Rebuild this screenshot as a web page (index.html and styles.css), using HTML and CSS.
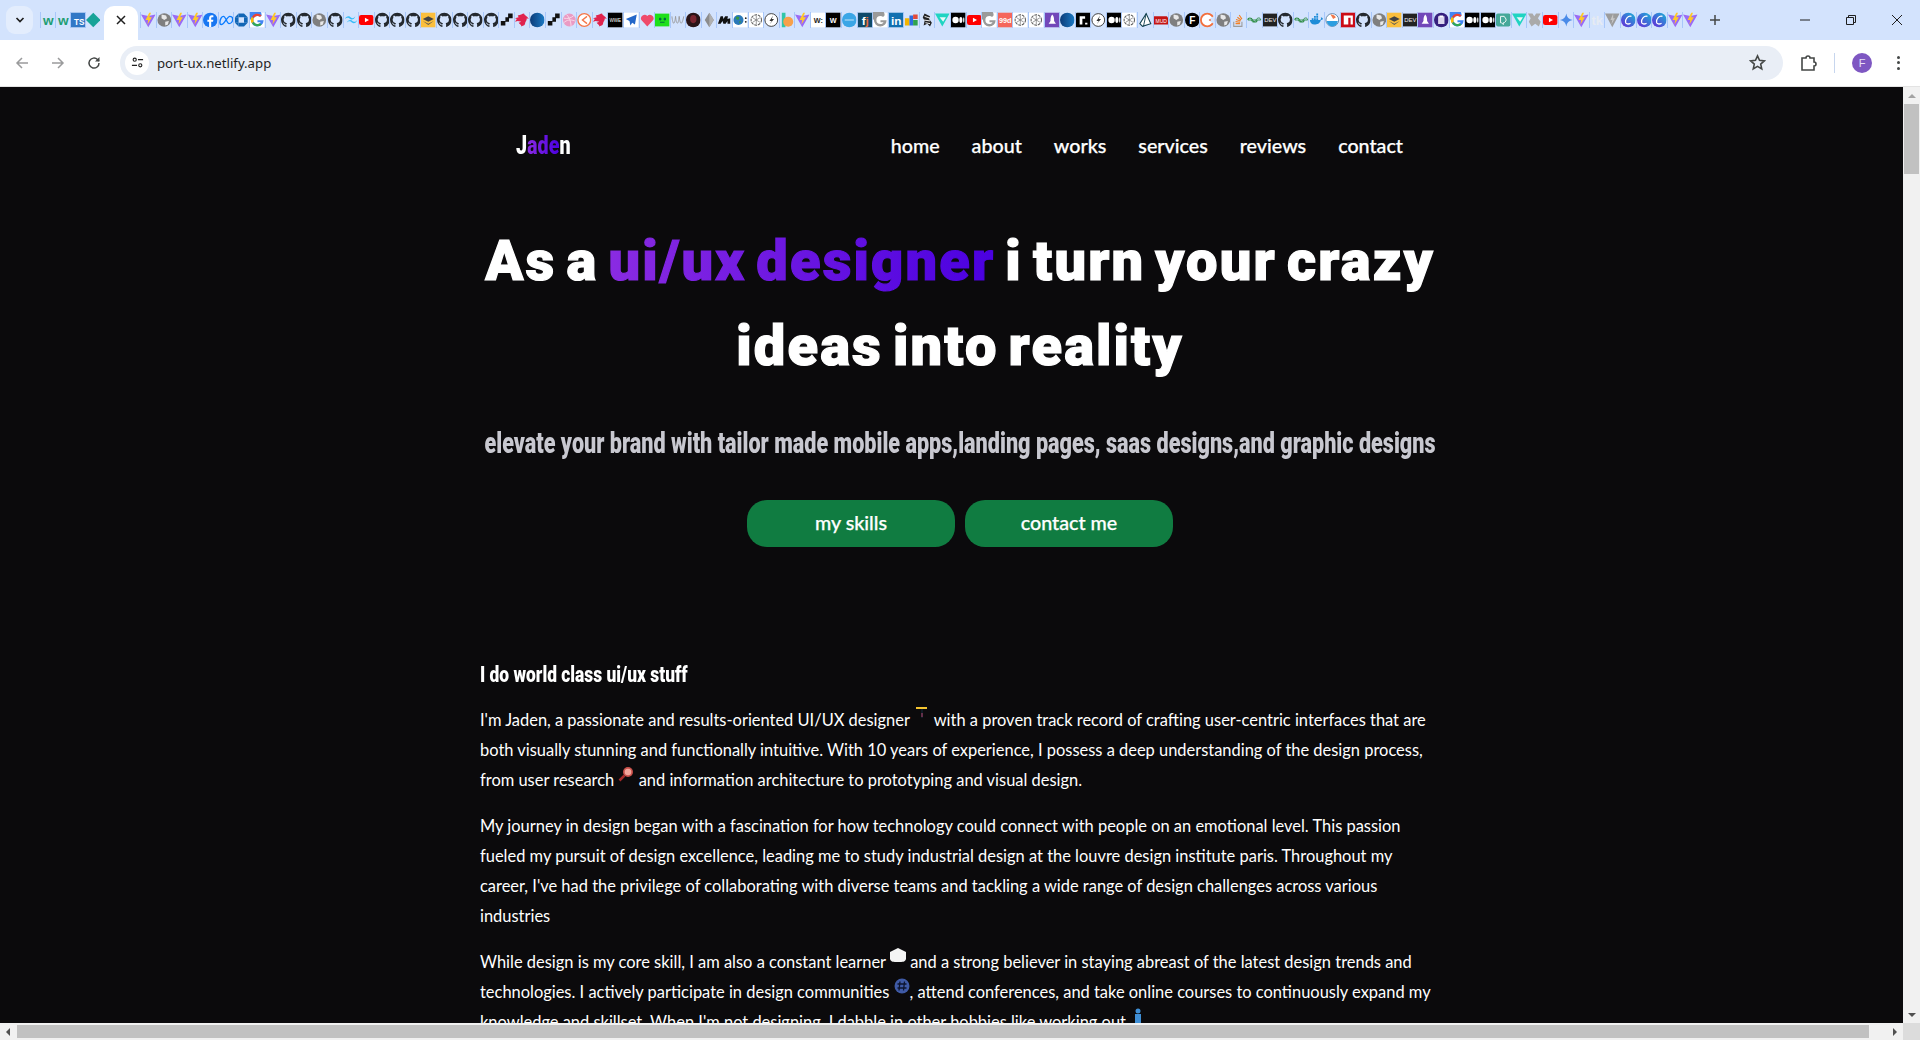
FILE: index.html
```html
<!DOCTYPE html>
<html lang="en">
<head>
<meta charset="utf-8">
<title>port-ux.netlify.app</title>
<link rel="stylesheet" href="styles.css">
</head>
<body>
<svg class="defs" width="0" height="0">
<defs>
<symbol id="vite" viewBox="0 0 16 16"><path d="M0 2 8 3.500 16 2 8 16z" fill="#9a6bf5"/><path d="M9 0 5 8h3L7 13l5-8H9l2-5z" fill="#ffc928"/></symbol>
<symbol id="globe" viewBox="0 0 16 16"><circle cx="8" cy="8" r="7.500" fill="#7f7f7f"/><path d="M5 2l5 1 1 3-3 2-3-2zM9 10l4-1-1 4-3 1z" fill="#e8e8e8"/></symbol>
<symbol id="gh" viewBox="0 0 16 16"><path d="M8 0C3.580 0 0 3.580 0 8c0 3.540 2.290 6.530 5.470 7.590.4.070.55-.17.55-.38 0-.19-.01-.82-.01-1.490-2.010.37-2.530-.49-2.690-.94-.09-.23-.48-.94-.82-1.130-.28-.15-.68-.52-.01-.53.63-.01 1.080.58 1.230.82.72 1.210 1.870.87 2.330.66.07-.52.28-.87.51-1.070-1.780-.2-3.640-.89-3.640-3.950 0-.87.31-1.590.82-2.150-.08-.2-.36-1.020.08-2.120 0 0 .67-.21 2.200.82.64-.18 1.320-.27 2-.27.68 0 1.360.09 2 .27 1.530-1.040 2.200-.82 2.200-.82.44 1.100.16 1.920.08 2.120.51.56.82 1.270.82 2.150 0 3.070-1.870 3.750-3.650 3.950.29.25.54.73.54 1.480 0 1.070-.01 1.930-.01 2.200 0 .21.15.46.55.38A8.013 8.013 0 0016 8c0-4.420-3.580-8-8-8z" fill="#24292f"/></symbol>
<symbol id="fb" viewBox="0 0 16 16"><circle cx="8" cy="8" r="8" fill="#1877f2"/><path d="M9 16v-6h2l.4-2.400H9V6.200c0-.8.3-1.200 1.200-1.200h1.200V3c-.6-.1-1.200-.2-1.800-.2C8 2.800 6.700 4 6.700 6v1.600H4.800V10h1.900v6z" fill="#fff"/></symbol>
<symbol id="meta" viewBox="0 0 16 16"><path d="M1 11c0-4 2-7 4-7s4 8 6 8 4-2 4-5-2-3-3-3-3 2-5 5-3 4-4.500 4S1 12 1 11z" fill="none" stroke="#0a7cff" stroke-width="1.500"/></symbol>
<symbol id="chase" viewBox="0 0 16 16"><path d="M5 1h6v4H5zM11 5h4v6h-4zM5 11h6v4H5zM1 5h4v6H1z" fill="#1266b5"/><path d="M5 1 1 5h4zM11 1l4 4h-4zM15 11l-4 4v-4zM1 11l4 4v-4z" fill="#1266b5"/></symbol>
<symbol id="g" viewBox="0 0 16 16"><rect width="16" height="16" fill="#fff"/><path d="M14 8.200H8.200v2.300h3.300c-.4 1.300-1.600 2-3.300 2a4.500 4.500 0 010-9c1.100 0 2.100.4 2.900 1.100l1.700-1.700A7 7 0 101 8a7 7 0 0014 .2z" fill="#4285f4"/><path d="M2.200 4.500l2.100 1.600a4.500 4.500 0 016.800-1.700l1.700-1.700a7 7 0 00-10.600 1.800z" fill="#ea4335"/><path d="M2.200 11.500l2.100-1.600a4.500 4.500 0 006.700 1.700l1.800 1.500a7 7 0 01-10.600-1.600z" fill="#34a853"/><path d="M1.700 4.700 4.200 6.200a4.500 4.500 0 000 3.500l-2.300 1.800a7 7 0 01-.2-6.800z" fill="#fbbc05"/></symbol>
<symbol id="gg" viewBox="0 0 16 16"><rect width="16" height="16" fill="#fff"/><path d="M14 8.200H8.200v2.300h3.300c-.4 1.300-1.600 2-3.300 2a4.500 4.500 0 010-9c1.100 0 2.100.4 2.900 1.100l1.700-1.700A7 7 0 101 8a7 7 0 0014 .2z" fill="#9a9a9a"/></symbol>
<symbol id="tw" viewBox="0 0 16 16"><path d="M1 7c1-2 2-3 4-3s2.500 2 4 2 2.500-.5 3.500-2c-1 2.500-2 3.500-4 3.500S6 5.500 4.500 5.500 2 6 1 7zM3 11c1-2 2-3 4-3s2.500 2 4 2 2.500-.5 3.500-2c-1 2.500-2 3.500-4 3.500S8 9.500 6.500 9.500 4 10 3 11z" fill="#38bdf8"/></symbol>
<symbol id="yt" viewBox="0 0 16 16"><rect y="2.500" width="16" height="11" rx="2.500" fill="#f00"/><path d="M6.500 5.500 11 8l-4.500 2.500z" fill="#fff"/></symbol>
<symbol id="stack" viewBox="0 0 16 16"><rect width="16" height="16" fill="#fbbf3d"/><path d="M8 4l6 3-6 3-6-3z" fill="#444"/><path d="M2 9l6 3 6-3-6 4.500z" fill="#555"/></symbol>
<symbol id="blk" viewBox="0 0 16 16"><path d="M2 9h5V5h3V1h5v5h-4v4H7v4H2z" fill="#111"/></symbol>
<symbol id="nest" viewBox="0 0 16 16"><path d="M3 3c3 0 5-2 7-2 0 2 4 3 5 6l-2-1c0 3-2 4-2 6s-3 2-4 3c0-2-2-2-3-4l3-1-4-1-3 1 2-3-2-1 4-1z" fill="#e0234e"/></symbol>
<symbol id="bluec" viewBox="0 0 16 16"><defs><linearGradient id="bc" x1="0" x2="1" y1="0" y2="0"><stop offset="0" stop-color="#0c3c78"/><stop offset="1" stop-color="#1b7ac4"/></linearGradient></defs><circle cx="8" cy="8" r="8" fill="url(#bc)"/></symbol>
<symbol id="drib" viewBox="0 0 16 16"><circle cx="8" cy="8" r="7" fill="#ea9bc4"/><path d="M2 6c4 1 8 0 11-3M5 2c3 3 5 8 5 13M2 11c3-3 7-4 12-2" stroke="#f9dbe9" fill="none"/></symbol>
<symbol id="oc" viewBox="0 0 16 16"><circle cx="8" cy="8" r="7" fill="#fff" stroke="#f4774a" stroke-width="1.500"/><path d="M11 4 6 8l5 4" fill="none" stroke="#f4774a" stroke-width="1.500"/></symbol>
<symbol id="blacksq" viewBox="0 0 16 16"><rect width="16" height="16" fill="#000"/><text x="8" y="10" class="svgt" font-size="5" fill="#fff" text-anchor="middle">WWE</text></symbol>
<symbol id="plane" viewBox="0 0 16 16"><rect width="16" height="16" fill="#fff"/><path d="M14 2 2 7l4 2 1 5 2-3 3 2z" fill="#2467c9"/></symbol>
<symbol id="heart" viewBox="0 0 16 16"><path d="M8 15 1.500 8A4 4 0 018 3.500 4 4 0 0114.500 8z" fill="#ef4a6a"/></symbol>
<symbol id="green" viewBox="0 0 16 16"><rect y="1" width="16" height="14" fill="#1ee01a"/><path d="M5 6h1.500v2H5zM10 6h1.500v2H10zM5.500 10.500h5" stroke="#064" fill="#064"/></symbol>
<symbol id="wave" viewBox="0 0 16 16"><path d="M1 4c1 10 3 10 4 0 1 10 3 10 4 0 1 10 3 10 5 0" fill="none" stroke="#9a9a9a"/></symbol>
<symbol id="dark" viewBox="0 0 16 16"><circle cx="8" cy="8" r="8" fill="#2a1517"/><ellipse cx="8" cy="7" rx="3.500" ry="4.500" fill="#7a2630"/></symbol>
<symbol id="eth" viewBox="0 0 16 16"><path d="M8 0l5 8-5 8-5-8z" fill="#8c8c8c"/><path d="M8 0v16l5-8z" fill="#b0b0b0"/></symbol>
<symbol id="mm" viewBox="0 0 16 16"><path d="M1 12 4 4h2.500l.5 3 2-3h3l-.5 3 3-1v6h-3V9l-2 3H7L6 9l-2 3z" fill="#111"/></symbol>
<symbol id="earth" viewBox="0 0 16 16"><rect width="16" height="16" fill="#fff"/><circle cx="6" cy="8" r="5.500" fill="#2a79b9"/><path d="M4 4l3 1-1 3-3-1zM7 9l2 1-2 2z" fill="#3a9a3d"/><circle cx="14" cy="6" r="1" fill="#222"/><circle cx="14" cy="10" r="1" fill="#222"/></symbol>
<symbol id="ai" viewBox="0 0 16 16"><rect width="16" height="16" fill="#fff"/><circle cx="8" cy="8" r="5.700" fill="none" stroke="#555" stroke-width="1.100" stroke-dasharray="3 1"/><path d="M8 3v10M4 5.500l8 5M12 5.500l-8 5" stroke="#777" stroke-width=".8"/></symbol>
<symbol id="bolt" viewBox="0 0 16 16"><circle cx="8" cy="8" r="7" fill="#fff" stroke="#333"/><path d="M10 3 6 9h2.500L6 13l5-6H8.500z" fill="#333"/></symbol>
<symbol id="orange" viewBox="0 0 16 16"><path d="M2 0h4v16H2z" fill="#31c6a8"/><circle cx="9" cy="10" r="5.500" fill="#f7a14a"/></symbol>
<symbol id="wc" viewBox="0 0 16 16"><rect width="16" height="16" fill="#fff"/><text x="8" y="11" class="svgt" font-size="8" font-weight="700" fill="#222" text-anchor="middle">W:</text></symbol>
<symbol id="ww" viewBox="0 0 16 16"><rect width="16" height="16" fill="#000"/><text x="8" y="11" class="svgt" font-size="8" font-weight="700" fill="#fff" text-anchor="middle">W</text></symbol>
<symbol id="bluejob" viewBox="0 0 16 16"><circle cx="8" cy="8" r="8" fill="#3ba6e6"/><path d="M3 8h10" stroke="#cfe9fa"/></symbol>
<symbol id="fj" viewBox="0 0 16 16"><rect width="16" height="16" fill="#0f4a6a"/><text x="8" y="13" class="svgt" font-size="13" font-weight="700" fill="#fff" text-anchor="middle">f<tspan fill="#ea6a3a">j</tspan></text></symbol>
<symbol id="in" viewBox="0 0 16 16"><rect width="16" height="16" fill="#1170b0"/><text x="8" y="13" class="svgt" font-size="13" font-weight="700" fill="#fff" text-anchor="middle">in</text></symbol>
<symbol id="colors" viewBox="0 0 16 16"><path d="M1 6h5v8H1z" fill="#f4b400"/><path d="M6 3h4v11H6z" fill="#2d6cdf"/><path d="M10 2h5v5h-5z" fill="#e24a3a"/><path d="M10 8h5v6h-5z" fill="#2fa24d"/></symbol>
<symbol id="zebra" viewBox="0 0 16 16"><path d="M5 1l6 3-1 3 3 4-2 4-3-3-4 2 1-5-2-4z" fill="#222"/><path d="M5 4l6 2M4 8l7 1M6 11l5 1" stroke="#fff"/></symbol>
<symbol id="tv" viewBox="0 0 16 16"><path d="M0 1h16L8 15z" fill="#20d4c2"/><path d="M5 5h7l-3 5z" fill="#eafaf8"/></symbol>
<symbol id="med" viewBox="0 0 16 16"><rect width="16" height="16" fill="#000"/><circle cx="5" cy="8" r="3.500" fill="#fff"/><ellipse cx="10.800" cy="8" rx="1.700" ry="3.300" fill="#fff"/><ellipse cx="14" cy="8" rx=".7" ry="3" fill="#fff"/></symbol>
<symbol id="d99" viewBox="0 0 16 16"><rect width="16" height="16" fill="#f5665c"/><text x="8" y="11" class="svgt" font-size="8" font-weight="700" fill="#fff" text-anchor="middle">99d</text></symbol>
<symbol id="rock" viewBox="0 0 16 16"><rect width="16" height="16" fill="#7248b9"/><path d="M8 2c2 2 2 5 2 7l2 3H4l2-3c0-2 0-5 2-7z" fill="#fff"/></symbol>
<symbol id="rr" viewBox="0 0 16 16"><rect width="16" height="16" rx="1" fill="#000"/><path d="M4 13V4h6v2.500H7V13zM10 11h2.500v2H10z" fill="#fff"/></symbol>
<symbol id="prisma" viewBox="0 0 16 16"><path d="M9 1l5 11-9 3-3-3z" fill="#fff" stroke="#12404f" stroke-width="1.200"/><path d="M9 1 6 15" stroke="#12404f"/></symbol>
<symbol id="mud" viewBox="0 0 16 16"><path d="M0 4h14l2 2v7H0z" fill="#c41414"/><text x="8" y="11" class="svgt" font-size="5.500" fill="#fff" text-anchor="middle">MUD</text></symbol>
<symbol id="ff" viewBox="0 0 16 16"><circle cx="8" cy="8" r="8" fill="#000"/><text x="8" y="12" class="svgt" font-size="11" font-weight="700" fill="#fff" text-anchor="middle">F</text></symbol>
<symbol id="pac" viewBox="0 0 16 16"><circle cx="8" cy="8" r="7" fill="#fff" stroke="#f2703e" stroke-width="2"/><path d="M16 3 9 8l7 5z" fill="#d3e3fd"/><circle cx="11" cy="8" r="1" fill="#f2703e"/></symbol>
<symbol id="so" viewBox="0 0 16 16"><path d="M3 10v5h9v-5" fill="none" stroke="#9c9c9c" stroke-width="1.200"/><path d="M5 12h5M5 9.800l5 .6M5.500 7.500l5 1.500M7 5l4 3M9 2.500l3 4.500" stroke="#f48024" stroke-width="1.200"/></symbol>
<symbol id="geek" viewBox="0 0 16 16"><path d="M1 8c0-3 4-3 5 0s5 3 5 0" fill="none" stroke="#2f8d46" stroke-width="1.200"/><path d="M15 8c0-3-4-3-5 0S5 11 5 8M1 8h14" fill="none" stroke="#2f8d46" stroke-width="1"/></symbol>
<symbol id="dev" viewBox="0 0 16 16"><rect y="1" width="16" height="14" fill="#222"/><text x="8" y="10.500" class="svgt" font-size="6.500" fill="#eee" text-anchor="middle">DEV</text></symbol>
<symbol id="docker" viewBox="0 0 16 16"><path d="M1 8h11c1 0 1.500-1.500 1-3 1 0 2 1 2.500 2-1 1-2 1-2.500 1-1 4-4 5-7 5S1 11 1 8z" fill="#1d8cd8"/><path d="M3 6h2v2H3zM5.500 6h2v2h-2zM8 6h2v2H8zM5.500 3.500h2v2h-2zM8 3.500h2v2H8zM8 1h2v2H8z" fill="#1d8cd8"/></symbol>
<symbol id="ring" viewBox="0 0 16 16"><circle cx="8" cy="8" r="7" fill="#fff" stroke="#5a7fa6"/><path d="M2 9h12a6 6 0 01-12 0z" fill="#2d9ee0"/><path d="M6 2a6 6 0 016 3l-3 2z" fill="#f1784a"/></symbol>
<symbol id="npm" viewBox="0 0 16 16"><rect width="16" height="16" fill="#cb0c17"/><path d="M3 3h10v10h-2.500V5.500h-2.500V13H3z" fill="#fff"/></symbol>
<symbol id="clip" viewBox="0 0 16 16"><circle cx="8" cy="8" r="8" fill="#36207e"/><path d="M4.500 4h7v8.500h-7z" fill="#dcd7ee"/><path d="M6 3h4v2H6z" fill="#fff"/></symbol>
<symbol id="dt" viewBox="0 0 16 16"><rect y="1" width="16" height="14" rx="2" fill="#46a899"/><path d="M5 4h4l2 3v2l-2 2H8v2l-2-2H5z" fill="none" stroke="#fff"/></symbol>
<symbol id="gray" viewBox="0 0 16 16"><path d="M1 1h5l2 3 2-3h5l-3 5 3 4-2 5-4-3-4 3-3-5 2-4z" fill="#aaa"/></symbol>
<symbol id="gem" viewBox="0 0 16 16"><path d="M8 1c.5 4 3 6.500 7 7-4 .5-6.500 3-7 7-.5-4-3-6.500-7-7 4-.5 6.500-3 7-7z" fill="#4a8be8"/></symbol>
<symbol id="tk" viewBox="0 0 16 16"><text x="8" y="13" class="svgt" font-size="14" font-weight="700" fill="#e6ebf3" text-anchor="middle">tk</text></symbol>
<symbol id="grayv" viewBox="0 0 16 16"><path d="M0 1h16L8 16z" fill="#9c9c9c"/><path d="M9 1 6 8h2l-1 5 4-7H9z" fill="#c6c6c6"/></symbol>
<symbol id="cc" viewBox="0 0 16 16"><defs><linearGradient id="ccg" x1="1" x2="0" y1="0" y2="1"><stop offset="0" stop-color="#16b7d6"/><stop offset="1" stop-color="#6a24d8"/></linearGradient></defs><circle cx="8" cy="8" r="8" fill="url(#ccg)"/><path d="M11.500 4C8 2.500 4.500 7 5 10.500c.3 2 3 2.500 5.500 1" fill="none" stroke="#fff" stroke-width="1.400"/></symbol>
<symbol id="wa" viewBox="0 0 16 16"><text x="8" y="13" class="svgt" font-size="15" font-weight="700" fill="#1f9e73" text-anchor="middle">w</text></symbol>
<symbol id="ts" viewBox="0 0 16 16"><rect width="16" height="16" fill="#3178c6"/><text x="9" y="14" class="svgt" font-size="9" font-weight="700" fill="#fff" text-anchor="middle">TS</text></symbol>
<symbol id="dia" viewBox="0 0 16 16"><path d="M8 0l8 8-8 8-8-8z" fill="#17a398"/></symbol>
</defs>
</svg>
<div class="browser">
  <header class="tabstrip">
    <button class="tabsearch"><svg class="ic10" viewBox="0 0 10 10"><path d="M1.500 3 5 6.500 8.500 3" fill="none" stroke="#1f1f1f" stroke-width="1.700"/></svg></button>
    <div class="pinned">
      <span class="fav"><svg><use href="#wa"/></svg></span><span class="fav"><svg><use href="#wa"/></svg></span><span class="fav"><svg><use href="#ts"/></svg></span><span class="fav"><svg><use href="#dia"/></svg></span>
    </div>
    <div class="activetab"><svg class="ic10" viewBox="0 0 10 10"><path d="M1 1l8 8M9 1 1 9" stroke="#1f1f1f" stroke-width="1.500"/></svg></div>
    <div class="favs">
      <span class="fav"><svg><use href="#vite"/></svg></span><span class="fav"><svg><use href="#globe"/></svg></span><span class="fav"><svg><use href="#vite"/></svg></span><span class="fav"><svg><use href="#vite"/></svg></span><span class="fav"><svg><use href="#fb"/></svg></span><span class="fav"><svg><use href="#meta"/></svg></span><span class="fav"><svg><use href="#chase"/></svg></span><span class="fav"><svg><use href="#g"/></svg></span><span class="fav"><svg><use href="#vite"/></svg></span><span class="fav"><svg><use href="#gh"/></svg></span><span class="fav"><svg><use href="#gh"/></svg></span><span class="fav"><svg><use href="#globe"/></svg></span><span class="fav"><svg><use href="#gh"/></svg></span><span class="fav"><svg><use href="#tw"/></svg></span><span class="fav"><svg><use href="#yt"/></svg></span><span class="fav"><svg><use href="#gh"/></svg></span><span class="fav"><svg><use href="#gh"/></svg></span><span class="fav"><svg><use href="#gh"/></svg></span><span class="fav"><svg><use href="#stack"/></svg></span><span class="fav"><svg><use href="#gh"/></svg></span><span class="fav"><svg><use href="#gh"/></svg></span><span class="fav"><svg><use href="#gh"/></svg></span><span class="fav"><svg><use href="#gh"/></svg></span><span class="fav"><svg><use href="#blk"/></svg></span><span class="fav"><svg><use href="#nest"/></svg></span><span class="fav"><svg><use href="#bluec"/></svg></span><span class="fav"><svg><use href="#blk"/></svg></span><span class="fav"><svg><use href="#drib"/></svg></span><span class="fav"><svg><use href="#oc"/></svg></span><span class="fav"><svg><use href="#nest"/></svg></span><span class="fav"><svg><use href="#blacksq"/></svg></span><span class="fav"><svg><use href="#plane"/></svg></span><span class="fav"><svg><use href="#heart"/></svg></span><span class="fav"><svg><use href="#green"/></svg></span><span class="fav"><svg><use href="#wave"/></svg></span><span class="fav"><svg><use href="#dark"/></svg></span><span class="fav"><svg><use href="#eth"/></svg></span><span class="fav"><svg><use href="#mm"/></svg></span><span class="fav"><svg><use href="#earth"/></svg></span><span class="fav"><svg><use href="#ai"/></svg></span><span class="fav"><svg><use href="#bolt"/></svg></span><span class="fav"><svg><use href="#orange"/></svg></span><span class="fav"><svg><use href="#vite"/></svg></span><span class="fav"><svg><use href="#wc"/></svg></span><span class="fav"><svg><use href="#ww"/></svg></span><span class="fav"><svg><use href="#bluejob"/></svg></span><span class="fav"><svg><use href="#fj"/></svg></span><span class="fav"><svg><use href="#gg"/></svg></span><span class="fav"><svg><use href="#in"/></svg></span><span class="fav"><svg><use href="#colors"/></svg></span><span class="fav"><svg><use href="#zebra"/></svg></span><span class="fav"><svg><use href="#tv"/></svg></span><span class="fav"><svg><use href="#med"/></svg></span><span class="fav"><svg><use href="#yt"/></svg></span><span class="fav"><svg><use href="#gg"/></svg></span><span class="fav"><svg><use href="#d99"/></svg></span><span class="fav"><svg><use href="#ai"/></svg></span><span class="fav"><svg><use href="#ai"/></svg></span><span class="fav"><svg><use href="#rock"/></svg></span><span class="fav"><svg><use href="#bluec"/></svg></span><span class="fav"><svg><use href="#rr"/></svg></span><span class="fav"><svg><use href="#bolt"/></svg></span><span class="fav"><svg><use href="#med"/></svg></span><span class="fav"><svg><use href="#ai"/></svg></span><span class="fav"><svg><use href="#prisma"/></svg></span><span class="fav"><svg><use href="#mud"/></svg></span><span class="fav"><svg><use href="#globe"/></svg></span><span class="fav"><svg><use href="#ff"/></svg></span><span class="fav"><svg><use href="#pac"/></svg></span><span class="fav"><svg><use href="#globe"/></svg></span><span class="fav"><svg><use href="#so"/></svg></span><span class="fav"><svg><use href="#geek"/></svg></span><span class="fav"><svg><use href="#dev"/></svg></span><span class="fav"><svg><use href="#gh"/></svg></span><span class="fav"><svg><use href="#geek"/></svg></span><span class="fav"><svg><use href="#docker"/></svg></span><span class="fav"><svg><use href="#ring"/></svg></span><span class="fav"><svg><use href="#npm"/></svg></span><span class="fav"><svg><use href="#gh"/></svg></span><span class="fav"><svg><use href="#globe"/></svg></span><span class="fav"><svg><use href="#stack"/></svg></span><span class="fav"><svg><use href="#dev"/></svg></span><span class="fav"><svg><use href="#rock"/></svg></span><span class="fav"><svg><use href="#clip"/></svg></span><span class="fav"><svg><use href="#g"/></svg></span><span class="fav"><svg><use href="#med"/></svg></span><span class="fav"><svg><use href="#med"/></svg></span><span class="fav"><svg><use href="#dt"/></svg></span><span class="fav"><svg><use href="#tv"/></svg></span><span class="fav"><svg><use href="#gray"/></svg></span><span class="fav"><svg><use href="#yt"/></svg></span><span class="fav"><svg><use href="#gem"/></svg></span><span class="fav"><svg><use href="#vite"/></svg></span><span class="fav"><svg><use href="#tk"/></svg></span><span class="fav"><svg><use href="#grayv"/></svg></span><span class="fav"><svg><use href="#cc"/></svg></span><span class="fav"><svg><use href="#cc"/></svg></span><span class="fav"><svg><use href="#cc"/></svg></span><span class="fav"><svg><use href="#vite"/></svg></span><span class="fav"><svg><use href="#vite"/></svg></span>
    </div>
    <svg class="newtab" viewBox="0 0 12 12"><path d="M6 1v10M1 6h10" stroke="#444746" stroke-width="1.500"/></svg>
    <div class="winctl">
      <svg viewBox="0 0 12 12"><path d="M1 6h10" stroke="#1f1f1f"/></svg>
      <svg viewBox="0 0 12 12"><path d="M1.500 3.500h7v7h-7zM3.500 3.500v-2h7v7h-2" fill="none" stroke="#1f1f1f"/></svg>
      <svg viewBox="0 0 12 12"><path d="M1 1l10 10M11 1 1 11" stroke="#1f1f1f"/></svg>
    </div>
  </header>
  <nav class="toolbar">
    <svg class="tbi arrow" viewBox="0 0 16 16"><path d="M14 8H3M8 3 3 8l5 5" fill="none" stroke="#9a9b9c" stroke-width="1.500"/></svg>
    <svg class="tbi arrow" viewBox="0 0 16 16"><path d="M2 8h11M8 3l5 5-5 5" fill="none" stroke="#9a9b9c" stroke-width="1.500"/></svg>
    <svg class="tbi reload" viewBox="0 0 16 16"><path d="M13 8a5 5 0 11-1.500-3.500L13 6" fill="none" stroke="#444746" stroke-width="1.500"/><path d="M13.500 2v4.500H9z" fill="#444746"/></svg>
    <div class="omnibox">
      <span class="chip"><svg viewBox="0 0 14 14"><circle cx="4" cy="4" r="1.700" fill="none" stroke="#1f1f1f" stroke-width="1.200"/><path d="M7.500 4H13M1 10h5.500" stroke="#1f1f1f" stroke-width="1.300"/><circle cx="10" cy="10" r="1.700" fill="none" stroke="#1f1f1f" stroke-width="1.200"/></svg></span>
      <span class="url">port-ux.netlify.app</span>
      <svg class="star" viewBox="0 0 16 16"><path d="M8 1.800l1.900 4.200 4.500.5-3.400 3 1 4.500L8 11.700 4 14l1-4.500-3.400-3 4.500-.5z" fill="none" stroke="#444746" stroke-width="1.500"/></svg>
    </div>
    <svg class="ext" viewBox="0 0 18 18"><path d="M2 4h4a2 2 0 014 0h4v4a2 2 0 010 4v4H2z" fill="none" stroke="#444746" stroke-width="1.600"/></svg>
    <span class="sep"></span>
    <span class="avatar">F</span>
    <span class="menu"><i></i><i></i><i></i></span>
  </nav>
  <div class="viewport">
    <main class="page">
      <div class="site">
        <div class="topbar">
          <div class="logo">J<span class="grad">ade</span>n</div>
          <div class="links"><a>home</a><a>about</a><a>works</a><a>services</a><a>reviews</a><a>contact</a></div>
        </div>
        <section class="hero">
          <h1>As a <span class="grad">ui/ux designer</span> i turn your crazy<br>ideas into reality</h1>
          <p class="lead">elevate your brand with tailor made mobile apps,landing pages, saas designs,and graphic designs</p>
          <div class="cta"><a class="btn">my skills</a><a class="btn">contact me</a></div>
        </section>
        <section class="about">
          <h2>I do world class ui/ux stuff</h2>
          <p>I'm Jaden, a passionate and results-oriented UI/UX designer <svg class="emoji" viewBox="0 0 16 16"><path d="M2 1h11v2H2z" fill="#f4c430"/><path d="M7 3h2v9H7z" fill="#0f1a25"/><path d="M7.500 7h1v4h-1z" fill="#b5446e"/></svg> with a proven track record of crafting user-centric interfaces that are<br>both visually stunning and functionally intuitive. With 10 years of experience, I possess a deep understanding of the design process,<br>from user research <svg class="emoji" viewBox="0 0 16 16"><circle cx="10" cy="6" r="5" fill="#c9504a"/><circle cx="10" cy="6" r="3.300" fill="#f2a59b"/><path d="M6.500 9.500 1.500 14.500" stroke="#a42a2a" stroke-width="2.500"/></svg> and information architecture to prototyping and visual design.</p>
          <p>My journey in design began with a fascination for how technology could connect with people on an emotional level. This passion<br>fueled my pursuit of design excellence, leading me to study industrial design at the louvre design institute paris. Throughout my<br>career, I've had the privilege of collaborating with diverse teams and tackling a wide range of design challenges across various<br>industries</p>
          <p>While design is my core skill, I am also a constant learner <svg class="emoji" viewBox="0 0 16 16"><path d="M8 0l8 4v7c-1 3-3 3-8 3s-7 0-8-3V4z" fill="#f4f4f4"/></svg> and a strong believer in staying abreast of the latest design trends and<br>technologies. I actively participate in design communities <svg class="emoji" viewBox="0 0 16 16"><circle cx="8" cy="8" r="7.500" fill="#3f5aa6"/><path d="M6 3.500 5 12.500M10.500 3.500l-1 9M3.500 6h9M3.500 10h9" stroke="#0d1530" stroke-width="1.300"/></svg>, attend conferences, and take online courses to continuously expand my<br>knowledge and skillset. When I'm not designing, I dabble in other hobbies like working out <svg class="emoji" viewBox="0 0 16 16"><circle cx="8" cy="3" r="2.500" fill="#3f8fd6"/><path d="M5 6h6v10H5z" fill="#3f8fd6"/></svg></p>
        </section>
      </div>
    </main>
    <div class="vscroll"><span class="up"></span><span class="vthumb"></span><span class="down"></span></div>
  </div>
  <div class="hscroll"><span class="left"></span><span class="hthumb"></span><span class="right"></span><span class="corner"></span></div>
</div>
</body>
</html>
```
FILE: styles.css
```css
* { box-sizing: border-box; }
html, body { margin: 0; height: 100%; overflow: hidden; }
body { font-family: Lato, "Open Sans", sans-serif; background: #fff; }
.defs { position: absolute; }
.svgt { font-family: "Liberation Sans", sans-serif; }
.browser { display: flex; flex-direction: column; width: 1920px; height: 1040px; }

.tabstrip { height: 40px; flex: none; display: flex; align-items: center; background: #d3e3fd; padding-left: 6px; }
.tabsearch { width: 27px; height: 28px; border: 0; padding: 0; border-radius: 9px; background: #e3edfd; display: flex; align-items: center; justify-content: center; margin-right: 7px; }
.ic10 { width: 10px; height: 10px; }
.pinned { display: flex; width: 64px; }
.pinned .fav { width: 15px; }
.activetab { width: 34px; height: 34px; margin-top: 6px; flex: none; background: #fff; border-radius: 10px 10px 0 0; display: flex; align-items: center; justify-content: center; padding-bottom: 6px; margin-right: 2px; }
.favs { display: flex; width: 1561px; }
.fav { flex: none; width: 15.590px; height: 16px; display: block; overflow: hidden; border-left: 1px solid #a8c7fa; }
.fav svg { display: block; width: 14.590px; height: 16px; }
.newtab { width: 12px; height: 12px; margin-left: 8px; flex: none; }
.winctl { margin-left: auto; display: flex; gap: 34px; padding-right: 17px; }
.winctl svg { width: 12px; height: 12px; }

.toolbar { height: 47px; flex: none; display: flex; align-items: center; background: #fff; border-bottom: 1px solid #e3e3e3; padding: 0 0 1px 14px; }
.tbi { width: 16px; height: 16px; flex: none; margin-right: 20px; }
.reload { margin-right: 18px; }
.omnibox { width: 1663px; height: 34px; flex: none; background: #e9eef6; border-radius: 17px; display: flex; align-items: center; padding: 0 17px 0 5px; }
.chip { width: 24px; height: 24px; border-radius: 50%; background: #fff; display: flex; align-items: center; justify-content: center; }
.chip svg { width: 13px; height: 13px; }
.url { font-size: 13.200px; color: #1f1f1f; margin-left: 8px; font-family: "Noto Sans", sans-serif; }
.star { width: 17px; height: 17px; margin-left: auto; }
.ext { width: 18px; height: 18px; margin-left: 17px; flex: none; }
.sep { width: 1px; height: 20px; background: #c7d6ee; margin-left: 16px; }
.avatar { width: 20px; height: 20px; border-radius: 50%; background: #7e57c2; color: #e9e0f7; font-size: 11px; display: flex; align-items: center; justify-content: center; margin-left: 17px; font-family: "Liberation Sans", sans-serif; }
.menu { display: flex; flex-direction: column; gap: 2.500px; margin-left: 25px; }
.menu i { width: 3px; height: 3px; border-radius: 50%; background: #444746; }

.viewport { flex: 1; display: flex; min-height: 0; }
.page { width: 1903px; flex: none; overflow: hidden; background: #0b0a0c; color: #fff; }
.site { width: 960px; margin-left: 480px; }
.topbar { display: flex; justify-content: space-between; align-items: center; padding: 40px 37px 0 36px; height: 76px; }
.logo { font-family: Roboto, sans-serif; font-weight: 900; font-size: 26px; transform: scaleX(.76); transform-origin: left center; }
.grad { background: linear-gradient(90deg, #8a2be2, #4a00e0); -webkit-background-clip: text; background-clip: text; color: transparent; }
.links { display: flex; gap: 32px; font-size: 19.700px; font-weight: 500; -webkit-text-stroke: .25px; }
.hero { text-align: center; }
h1 { margin: 56px 0 0; font-family: Roboto, sans-serif; font-weight: 900; font-size: 56px; line-height: 85px; letter-spacing: 2.150px; word-spacing: -6px; -webkit-text-stroke: 1.200px; white-space: nowrap; }
.lead { margin: 36px -200px 0; font-family: Roboto, sans-serif; font-weight: 900; font-size: 29px; line-height: 36px; color: #c8c8d0; white-space: nowrap; transform: scaleX(.745); }
.cta { display: flex; justify-content: center; gap: 10px; margin-top: 39px; }
.btn { width: 208px; height: 47px; border-radius: 20px; background: #107c41; display: flex; align-items: center; justify-content: center; font-size: 19.700px; font-weight: 500; -webkit-text-stroke: .25px; padding-bottom: 2px; }
.about { margin-top: 114px; }
h2 { margin: 0; font-family: Roboto, sans-serif; font-size: 22px; line-height: 28px; font-weight: 900; transform: scaleX(.79); transform-origin: left center; white-space: nowrap; }
.about p { margin: 16px 0 0; font-size: 16.450px; line-height: 30px; white-space: nowrap; }
.emoji { width: 16px; height: 16px; vertical-align: 4px; }

.vscroll { width: 17px; flex: none; background: #f1f1f1; display: flex; flex-direction: column; align-items: center; }
.up, .down { width: 0; height: 0; border-left: 4px solid transparent; border-right: 4px solid transparent; flex: none; }
.up { border-bottom: 4px solid #a3a3a3; margin-top: 7px; }
.vthumb { width: 15px; height: 70px; background: #c1c1c1; margin-top: 6px; }
.down { border-top: 4px solid #505050; margin-top: auto; margin-bottom: 6px; }
.hscroll { height: 17px; flex: none; display: flex; align-items: center; background: #f1f1f1; }
.left, .right { width: 0; height: 0; border-top: 4px solid transparent; border-bottom: 4px solid transparent; flex: none; }
.left { border-right: 4px solid #505050; margin-left: 6px; }
.hthumb { width: 1852px; height: 13px; background: #c1c1c1; margin-left: 7px; }
.right { border-left: 4px solid #505050; margin-left: 24px; }
.corner { width: 17px; height: 17px; background: #dcdcdc; margin-left: auto; }
```
